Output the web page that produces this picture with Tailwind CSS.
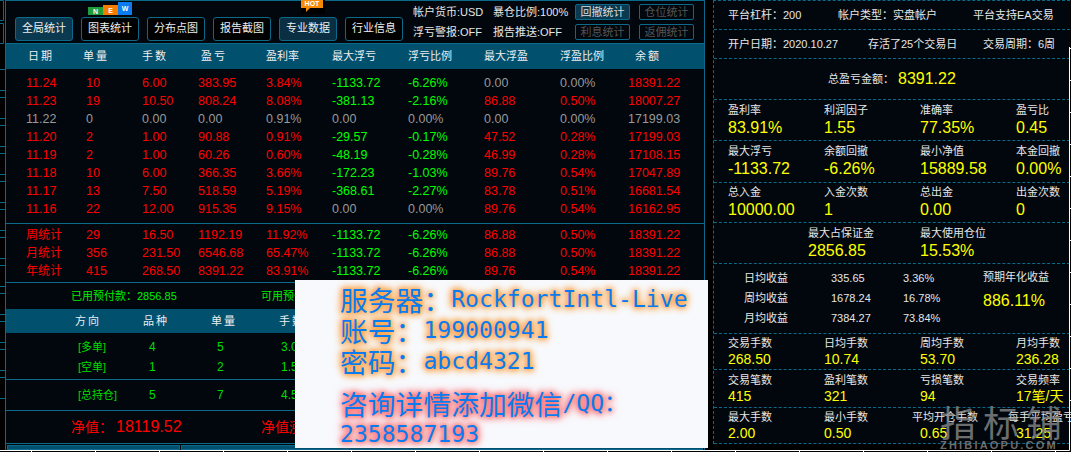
<!DOCTYPE html>
<html lang="zh-CN">
<head>
  <meta charset="UTF-8">
  <title>交易统计</title>
  <script src="https://cdn.jsdelivr.net/npm/@tailwindcss/browser@4"></script>
</head>
<body class="bg-black font-['Liberation_Sans','Noto_Sans_CJK_SC',sans-serif] text-[12.5px] leading-none text-[#e6e6e6]">
<div class="relative w-[1071px] h-[452px] overflow-hidden flex bg-black">

  <!-- left window strip -->
  <svg class="w-[5px] h-[450px] shrink-0" viewBox="0 0 5 450" fill="none" stroke="#0b6a8a">
    <path d="M0 .5H3.5V20.5H0M0 23.5H3.5V43.5H0M0 69.5H5M0 90.5H5M0 97.5H5M0 118.5H5M0 125.5H5M0 146.5H5M0 153.5H5M0 174.5H5M0 181.5H5M0 202.5H5M0 209.5H5M0 230.5H5M0 237.5H5M0 258.5H5M0 265.5H5M0 286.5H5M0 293.5H5M0 314.5H5M0 321.5H5M0 342.5H5M0 349.5H5M0 370.5H5M0 377.5H5M0 398.5H5"/>
  </svg>

  <!-- main panel -->
  <div class="w-[700px] h-[450px] shrink-0 bg-[#01070d] border-x border-[#0b6a8a] flex flex-col">

    <!-- toolbar -->
    <div class="relative h-[44px] shrink-0 border-y border-[#0b6a8a] flex items-center pl-[9px]">
      <div class="flex gap-[8px] mt-[13px] text-[11px]">
        <button class="w-[58px] h-[24px] rounded-[3px] border border-[#0b6a8a] bg-[#0a3950] text-[#eee]">全局统计</button>
        <button class="w-[58px] h-[24px] rounded-[3px] border border-[#0b6a8a] bg-black text-[#eee]">图表统计</button>
        <button class="w-[58px] h-[24px] rounded-[3px] border border-[#0b6a8a] bg-black text-[#eee]">分布点图</button>
        <button class="w-[58px] h-[24px] rounded-[3px] border border-[#0b6a8a] bg-black text-[#eee]">报告截图</button>
        <button class="w-[58px] h-[24px] rounded-[3px] border border-[#0b6a8a] bg-[#0a2f42] text-[#eee]">专业数据</button>
        <button class="w-[58px] h-[24px] rounded-[3px] border border-[#0b6a8a] bg-black text-[#eee]">行业信息</button>
      </div>
      <div class="ml-[10px] grid grid-cols-[80px_82px] gap-y-[9px] text-[11px] whitespace-nowrap">
        <span>帐户货币:USD</span><span>暴仓比例:100%</span>
        <span>浮亏警报:OFF</span><span>报告推送:OFF</span>
      </div>
      <div class="grid grid-cols-[55px_55px] gap-x-[9px] gap-y-[4px] text-[11px]">
        <button class="h-[16px] rounded-[2px] border border-[#0b6a8a] bg-[#0a3950] text-[#ddd]">回撤统计</button>
        <button class="h-[16px] rounded-[2px] border border-[#0b6a8a] text-[#555]">仓位统计</button>
        <button class="h-[16px] rounded-[2px] border border-[#0b6a8a] text-[#555]">利息统计</button>
        <button class="h-[16px] rounded-[2px] border border-[#0b6a8a] text-[#555]">返佣统计</button>
      </div>
      <!-- NEW / HOT badges -->
      <div class="absolute left-[82px] top-[1px] h-[13px] flex items-end text-[7px] font-bold text-white">
        <span class="w-[15px] h-[8px] bg-[#1f9d3c] flex items-center justify-center">N</span>
        <span class="w-[15px] h-[10px] bg-[#f57c00] flex items-center justify-center">E</span>
        <span class="w-[14px] h-[13px] bg-[#0a7cf0] flex items-center justify-center">W</span>
      </div>
      <div class="absolute left-[295px] top-[-1px] w-[24px] h-[14px] bg-black">
        <span class="block w-[22px] h-[8px] bg-[#f58a07] text-[7px] font-bold text-white text-center leading-[8px]">HOT</span>
        <span class="block ml-[5px] w-0 h-0 border-t-[4px] border-t-[#f58a07] border-r-[4px] border-r-transparent"></span>
      </div>
    </div>

    <!-- table head -->
    <div class="h-[25px] shrink-0 bg-[#00506e] grid grid-cols-[60px_56px_56px_68px_66px_76px_76px_76px_68px_1fr] pl-[20px] items-center text-[11px] text-[#eee]">
      <span class="pl-[2px] tracking-[2px]">日期</span>
      <span class="ml-[-3px] tracking-[2px]">单量</span>
      <span class="tracking-[2px]">手数</span>
      <span class="pl-[3px] tracking-[2px]">盈亏</span>
      <span>盈利率</span>
      <span>最大浮亏</span>
      <span>浮亏比例</span>
      <span>最大浮盈</span>
      <span>浮盈比例</span>
      <span class="pl-[7px] tracking-[2px]">余额</span>
    </div>

    <!-- daily rows -->
    <div class="pt-[5px] h-[155px] shrink-0 border-b border-[#0b6a8a]">
      <div class="h-[18px] grid grid-cols-[60px_56px_56px_68px_66px_76px_76px_76px_68px_1fr] pl-[20px] items-center text-[#f00]"><span>11.24</span><span>10</span><span>6.00</span><span>383.95</span><span>3.84%</span><span class="text-[#0f0]">-1133.72</span><span class="text-[#0f0]">-6.26%</span><span class="text-[#999]">0.00</span><span class="text-[#999]">0.00%</span><span>18391.22</span></div>
      <div class="h-[18px] grid grid-cols-[60px_56px_56px_68px_66px_76px_76px_76px_68px_1fr] pl-[20px] items-center text-[#f00]"><span>11.23</span><span>19</span><span>10.50</span><span>808.24</span><span>8.08%</span><span class="text-[#0f0]">-381.13</span><span class="text-[#0f0]">-2.16%</span><span>86.88</span><span>0.50%</span><span>18007.27</span></div>
      <div class="h-[18px] grid grid-cols-[60px_56px_56px_68px_66px_76px_76px_76px_68px_1fr] pl-[20px] items-center text-[#999]"><span>11.22</span><span>0</span><span>0.00</span><span>0.00</span><span>0.91%</span><span>0.00</span><span>0.00%</span><span>0.00</span><span>0.00%</span><span>17199.03</span></div>
      <div class="h-[18px] grid grid-cols-[60px_56px_56px_68px_66px_76px_76px_76px_68px_1fr] pl-[20px] items-center text-[#f00]"><span>11.20</span><span>2</span><span>1.00</span><span>90.88</span><span>0.91%</span><span class="text-[#0f0]">-29.57</span><span class="text-[#0f0]">-0.17%</span><span>47.52</span><span>0.28%</span><span>17199.03</span></div>
      <div class="h-[18px] grid grid-cols-[60px_56px_56px_68px_66px_76px_76px_76px_68px_1fr] pl-[20px] items-center text-[#f00]"><span>11.19</span><span>2</span><span>1.00</span><span>60.26</span><span>0.60%</span><span class="text-[#0f0]">-48.19</span><span class="text-[#0f0]">-0.28%</span><span>46.99</span><span>0.28%</span><span>17108.15</span></div>
      <div class="h-[18px] grid grid-cols-[60px_56px_56px_68px_66px_76px_76px_76px_68px_1fr] pl-[20px] items-center text-[#f00]"><span>11.18</span><span>10</span><span>6.00</span><span>366.35</span><span>3.66%</span><span class="text-[#0f0]">-172.23</span><span class="text-[#0f0]">-1.03%</span><span>89.76</span><span>0.54%</span><span>17047.89</span></div>
      <div class="h-[18px] grid grid-cols-[60px_56px_56px_68px_66px_76px_76px_76px_68px_1fr] pl-[20px] items-center text-[#f00]"><span>11.17</span><span>13</span><span>7.50</span><span>518.59</span><span>5.19%</span><span class="text-[#0f0]">-368.61</span><span class="text-[#0f0]">-2.27%</span><span>83.78</span><span>0.51%</span><span>16681.54</span></div>
      <div class="h-[18px] grid grid-cols-[60px_56px_56px_68px_66px_76px_76px_76px_68px_1fr] pl-[20px] items-center text-[#f00]"><span>11.16</span><span>22</span><span>12.00</span><span>915.35</span><span>9.15%</span><span class="text-[#999]">0.00</span><span class="text-[#999]">0.00%</span><span>89.76</span><span>0.54%</span><span>16162.95</span></div>
    </div>

    <!-- week / month / year -->
    <div class="pt-[2px] h-[59px] shrink-0 border-b border-[#0b6a8a]">
      <div class="h-[18px] grid grid-cols-[60px_56px_56px_68px_66px_76px_76px_76px_68px_1fr] pl-[20px] items-center text-[#f00]"><span class="text-[12px]">周统计</span><span>29</span><span>16.50</span><span>1192.19</span><span>11.92%</span><span class="text-[#0f0]">-1133.72</span><span class="text-[#0f0]">-6.26%</span><span>86.88</span><span>0.50%</span><span>18391.22</span></div>
      <div class="h-[18px] grid grid-cols-[60px_56px_56px_68px_66px_76px_76px_76px_68px_1fr] pl-[20px] items-center text-[#f00]"><span class="text-[12px]">月统计</span><span>356</span><span>231.50</span><span>6546.68</span><span>65.47%</span><span class="text-[#0f0]">-1133.72</span><span class="text-[#0f0]">-6.26%</span><span>86.88</span><span>0.50%</span><span>18391.22</span></div>
      <div class="h-[18px] grid grid-cols-[60px_56px_56px_68px_66px_76px_76px_76px_68px_1fr] pl-[20px] items-center text-[#f00]"><span class="text-[12px]">年统计</span><span>415</span><span>268.50</span><span>8391.22</span><span>83.91%</span><span class="text-[#0f0]">-1133.72</span><span class="text-[#0f0]">-6.26%</span><span>89.76</span><span>0.54%</span><span>18391.22</span></div>
    </div>

    <!-- margin -->
    <div class="h-[26px] shrink-0 flex items-center pl-[65px] text-[11px] text-[#0e0]">
      <span class="w-[190px]">已用预付款&#xFF1A;2856.85</span><span>可用预付款&#xFF1A;15262.67</span>
    </div>

    <!-- positions -->
    <div class="h-[24px] shrink-0 bg-[#00506e] grid grid-cols-[68px_68px_68px_68px] pl-[69px] items-center text-[11px] tracking-[2px] text-[#eee]">
      <span>方向</span><span>品种</span><span>单量</span><span>手数</span>
    </div>
    <div class="h-[47px] shrink-0 border-b border-[#0b6a8a] pt-[4px] text-[12px] text-[#0d0]">
      <div class="h-[20px] grid grid-cols-[71px_68px_64px_68px] pl-[72px] items-center"><span class="text-[11px]">[多单]</span><span>4</span><span>5</span><span>3.00</span></div>
      <div class="h-[20px] grid grid-cols-[71px_68px_64px_68px] pl-[72px] items-center"><span class="text-[11px]">[空单]</span><span>1</span><span>2</span><span>1.50</span></div>
    </div>
    <div class="h-[31px] shrink-0 border-b border-[#0b6a8a] grid grid-cols-[71px_68px_64px_68px] pl-[72px] items-center text-[12px] text-[#0d0]">
      <span class="text-[11px]">[总持仓]</span><span>5</span><span>7</span><span>4.50</span>
    </div>

    <!-- equity -->
    <div class="h-[33px] shrink-0 border-b border-[#0b6a8a] flex items-center pl-[65px] text-[14px] text-[#f00]">
      <span class="w-[190px]">净值&#xFF1A;<span class="ml-[3px] text-[16px]">18119.52</span></span><span>净值涨幅&#xFF1A;<span class="ml-[3px] text-[16px]">81.20%</span></span>
    </div>
    <div class="flex-1 flex gap-[1px] pt-[1px] px-[1px]">
      <div class="w-[173px] bg-[#00506e] border border-[#0b6a8a]"></div>
      <div class="flex-1 bg-[#00506e] border border-[#0b6a8a]"></div>
    </div>
  </div>

  <!-- stats panel -->
  <div class="ml-[8px] w-[357px] h-[444px] shrink-0 bg-[#01070d] border-l border-t border-dashed border-[#0b6a8a] flex flex-col text-[11px] whitespace-nowrap">
    <div class="h-[29px] shrink-0 border-b border-dashed border-[#0b6a8a] flex items-center pl-[14px]">
      <span class="w-[110px]">平台杠杆&#xFF1A;200</span><span class="w-[135px]">帐户类型&#xFF1A;实盘帐户</span><span>平台支持EA交易</span>
    </div>
    <div class="h-[29px] shrink-0 border-b border-dashed border-[#0b6a8a] flex items-center pl-[14px]">
      <span class="w-[140px]">开户日期&#xFF1A;2020.10.27</span><span class="w-[115px]">存活了25个交易日</span><span>交易周期&#xFF1A;6周</span>
    </div>
    <div class="h-[41px] shrink-0 border-b border-dashed border-[#0b6a8a] flex items-center pl-[114px]">
      <span class="w-[70px]">总盈亏金额&#xFF1A;</span><span class="text-[16px] text-[#ff0]">8391.22</span>
    </div>

    <div class="h-[41px] shrink-0 border-b border-dashed border-[#0b6a8a] grid grid-cols-[96px_96px_96px_1fr] pl-[14px] pt-[5px] content-start gap-y-[4px]">
      <span>盈利率</span><span>利润因子</span><span>准确率</span><span>盈亏比</span>
      <span class="text-[16px] text-[#ff0]">83.91%</span><span class="text-[16px] text-[#ff0]">1.55</span><span class="text-[16px] text-[#ff0]">77.35%</span><span class="text-[16px] text-[#ff0]">0.45</span>
    </div>
    <div class="h-[42px] shrink-0 border-b border-dashed border-[#0b6a8a] grid grid-cols-[96px_96px_96px_1fr] pl-[14px] pt-[5px] content-start gap-y-[4px]">
      <span>最大浮亏</span><span>余额回撤</span><span>最小净值</span><span>本金回撤</span>
      <span class="text-[16px] text-[#ff0]">-1133.72</span><span class="text-[16px] text-[#ff0]">-6.26%</span><span class="text-[16px] text-[#ff0]">15889.58</span><span class="text-[16px] text-[#ff0]">0.00%</span>
    </div>
    <div class="h-[40px] shrink-0 border-b border-dashed border-[#0b6a8a] grid grid-cols-[96px_96px_96px_1fr] pl-[14px] pt-[4px] content-start gap-y-[4px]">
      <span>总入金</span><span>入金次数</span><span>总出金</span><span>出金次数</span>
      <span class="text-[16px] text-[#ff0]">10000.00</span><span class="text-[16px] text-[#ff0]">1</span><span class="text-[16px] text-[#ff0]">0.00</span><span class="text-[16px] text-[#ff0]">0</span>
    </div>
    <div class="h-[41px] shrink-0 border-b border-dashed border-[#0b6a8a] grid grid-cols-[112px_1fr] pl-[94px] pt-[5px] content-start gap-y-[4px]">
      <span>最大占保证金</span><span>最大使用仓位</span>
      <span class="text-[16px] text-[#ff0]">2856.85</span><span class="text-[16px] text-[#ff0]">15.53%</span>
    </div>

    <div class="h-[70px] shrink-0 border-b border-dashed border-[#0b6a8a] flex pt-[4px]">
      <div class="w-[269px] pl-[30px] grid grid-cols-[87px_72px_1fr] auto-rows-[20px] items-center">
        <span>日均收益</span><span>335.65</span><span>3.36%</span>
        <span>周均收益</span><span>1678.24</span><span>16.78%</span>
        <span>月均收益</span><span>7384.27</span><span>73.84%</span>
      </div>
      <div class="pt-[4px] flex flex-col gap-[10px]">
        <span>预期年化收益</span><span class="text-[16px] text-[#ff0]">886.11%</span>
      </div>
    </div>

    <div class="h-[36px] shrink-0 border-b border-dashed border-[#0b6a8a] grid grid-cols-[96px_96px_96px_1fr] pl-[14px] pt-[4px] content-start gap-y-[3px]">
      <span>交易手数</span><span>日均手数</span><span>周均手数</span><span>月均手数</span>
      <span class="text-[14px] text-[#ff0]">268.50</span><span class="text-[14px] text-[#ff0]">10.74</span><span class="text-[14px] text-[#ff0]">53.70</span><span class="text-[14px] text-[#ff0]">236.28</span>
    </div>
    <div class="h-[38px] shrink-0 border-b border-dashed border-[#0b6a8a] grid grid-cols-[96px_96px_96px_1fr] pl-[14px] pt-[5px] content-start gap-y-[3px]">
      <span>交易笔数</span><span>盈利笔数</span><span>亏损笔数</span><span>交易频率</span>
      <span class="text-[14px] text-[#ff0]">415</span><span class="text-[14px] text-[#ff0]">321</span><span class="text-[14px] text-[#ff0]">94</span><span class="text-[14px] text-[#ff0]">17笔/天</span>
    </div>
    <div class="h-[36px] shrink-0 border-b border-dashed border-[#0b6a8a] grid grid-cols-[96px_96px_96px_1fr] pl-[14px] pt-[4px] content-start gap-y-[3px]">
      <span>最大手数</span><span>最小手数</span><span class="ml-[-8px]">平均开仓手数</span><span class="ml-[-8px]">每手平均盈亏</span>
      <span class="text-[14px] text-[#ff0]">2.00</span><span class="text-[14px] text-[#ff0]">0.50</span><span class="text-[14px] text-[#ff0]">0.65</span><span class="text-[14px] text-[#ff0]">31.25</span>
    </div>
  </div>

  <!-- white edge of the window behind -->
  <svg class="absolute left-0 top-0 pointer-events-none" width="1071" height="452" fill="none" stroke="#fff">
    <path d="M1069.5 47V450.5H0M1069.5 48.5H1071M1069.5 80.5H1071M1069.5 112.5H1071M1069.5 144.5H1071M1069.5 176.5H1071M1069.5 208.5H1071M1069.5 240.5H1071M1069.5 272.5H1071M1069.5 304.5H1071M1069.5 336.5H1071M1069.5 368.5H1071M1069.5 400.5H1071M31.5 450V452M95.5 450V452M159.5 450V452M223.5 450V452M287.5 450V452M351.5 450V452M415.5 450V452M479.5 450V452M543.5 450V452M607.5 450V452M671.5 450V452M735.5 450V452M799.5 450V452M863.5 450V452M927.5 450V452M991.5 450V452M1055.5 450V452"/>
  </svg>

  <!-- contact card on top -->
  <div class="absolute left-[295px] top-[280px] w-[413px] h-[168px] bg-[#f8f9fd] pl-[45px] pt-[4px] text-[#0a7cf0] font-['DejaVu_Sans_Mono','Noto_Sans_CJK_SC',monospace] text-[23.1px] whitespace-nowrap">
    <div class="[text-shadow:0_0_4px_#ffa040,0_0_6px_#ffa040,0_0_8px_#ffa040,0_0_10px_#ffa040]">
      <p class="h-[31px] flex items-center"><span class="font-['Noto_Sans_CJK_SC'] text-[27.8px]">服务器&#xFF1A;</span>RockfortIntl-Live</p>
      <p class="h-[31px] flex items-center"><span class="font-['Noto_Sans_CJK_SC'] text-[27.8px]">账号&#xFF1A;</span>199000941</p>
      <p class="h-[31px] flex items-center"><span class="font-['Noto_Sans_CJK_SC'] text-[27.8px]">密码&#xFF1A;</span>abcd4321</p>
    </div>
    <div class="mt-[11px] [text-shadow:0_0_4px_#ff7070,0_0_6px_#ff7070,0_0_8px_#ff7070,0_0_10px_#ff7070]">
      <p class="h-[31px] flex items-center"><span class="font-['Noto_Sans_CJK_SC'] text-[27.8px]">咨询详情添加微信</span>/QQ&#xFF1A;</p>
      <p class="h-[31px] flex items-center">2358587193</p>
    </div>
  </div>

  <!-- watermark -->
  <div class="absolute left-[940px] top-[402px] text-[#8a8a8a]/80 pointer-events-none">
    <p class="text-[36px] leading-[38px] tracking-[7px] font-['Noto_Sans_CJK_SC']">指标铺</p>
    <p class="text-[11px] font-bold tracking-[2.2px] leading-[10px]">ZHIBIAOPU.COM</p>
  </div>
</div>
</body>
</html>
